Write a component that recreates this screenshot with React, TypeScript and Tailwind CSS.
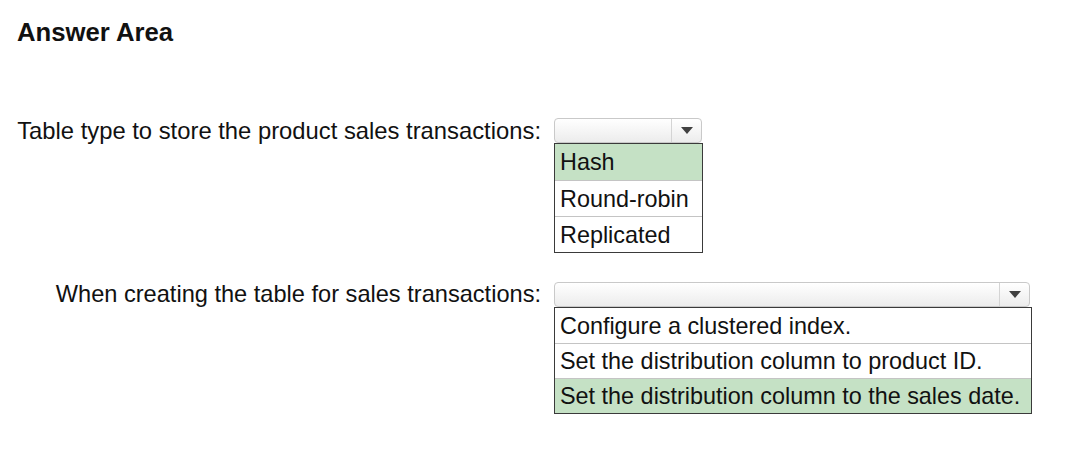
import React from "react";

function Arrow() {
  return (
    <svg width="12" height="7" viewBox="0 0 12 7">
      <path d="M0 0 L12 0 L6 7 Z" fill="#404040" />
    </svg>
  );
}

function Select({ width }: { width: number }) {
  return (
    <div
      className="flex h-[25px] rounded-[4px] border border-[#c9c9c9] bg-gradient-to-b from-white to-[#ececec]"
      style={{ width }}
    >
      <div className="flex-1" />
      <div className="flex w-[30px] items-center justify-center border-l border-[#d4d4d4]">
        <Arrow />
      </div>
    </div>
  );
}

function List({
  width,
  items,
  selected,
  rowH,
}: {
  width: number;
  items: string[];
  selected: number;
  rowH: number;
}) {
  return (
    <div className="border border-[#3a3a3a] bg-white" style={{ width }}>
      {items.map((t, i) => (
        <div
          key={t}
          className={
            "flex items-center pl-[5px] pt-[2px] text-[23.4px] leading-none text-[#111] " +
            (i > 0 ? "border-t border-[#c4c4c4] " : "") +
            (i === selected ? "bg-[#c5e1c5] text-[#0f2a0f]" : "")
          }
          style={{ height: rowH }}
        >
          {t}
        </div>
      ))}
    </div>
  );
}

function Row({
  label,
  labelClass,
  selWidth,
  listWidth,
  items,
  selected,
  rowH,
}: {
  label: string;
  labelClass: string;
  selWidth: number;
  listWidth: number;
  items: string[];
  selected: number;
  rowH: number;
}) {
  return (
    <div className="flex">
      <div className={"w-[541px] h-[25px] text-right leading-[25px] text-[#111] " + labelClass}>{label}</div>
      <div className="ml-[13px] flex flex-col">
        <Select width={selWidth} />
        <List width={listWidth} items={items} selected={selected} rowH={rowH} />
      </div>
    </div>
  );
}

export default function App() {
  return (
    <div
      className="w-[1074px] h-[464px] bg-white"
      style={{ fontFamily: '"Liberation Sans", Arial, sans-serif' }}
    >
      <div className="pl-[17px] pt-[19px] h-[45px] text-[25.7px] font-bold leading-[26px] text-[#111]">Answer Area</div>
      <div className="mt-[73px] flex flex-col gap-[29px]">
        <Row
          label="Table type to store the product sales transactions:"
          labelClass="text-[23.8px]"
          selWidth={148}
          listWidth={149}
          items={["Hash", "Round-robin", "Replicated"]}
          selected={0}
          rowH={36}
        />
        <Row
          label="When creating the table for sales transactions:"
          labelClass="text-[23.6px]"
          selWidth={476}
          listWidth={478}
          items={[
            "Configure a clustered index.",
            "Set the distribution column to product ID.",
            "Set the distribution column to the sales date.",
          ]}
          selected={2}
          rowH={35}
        />
      </div>
    </div>
  );
}
